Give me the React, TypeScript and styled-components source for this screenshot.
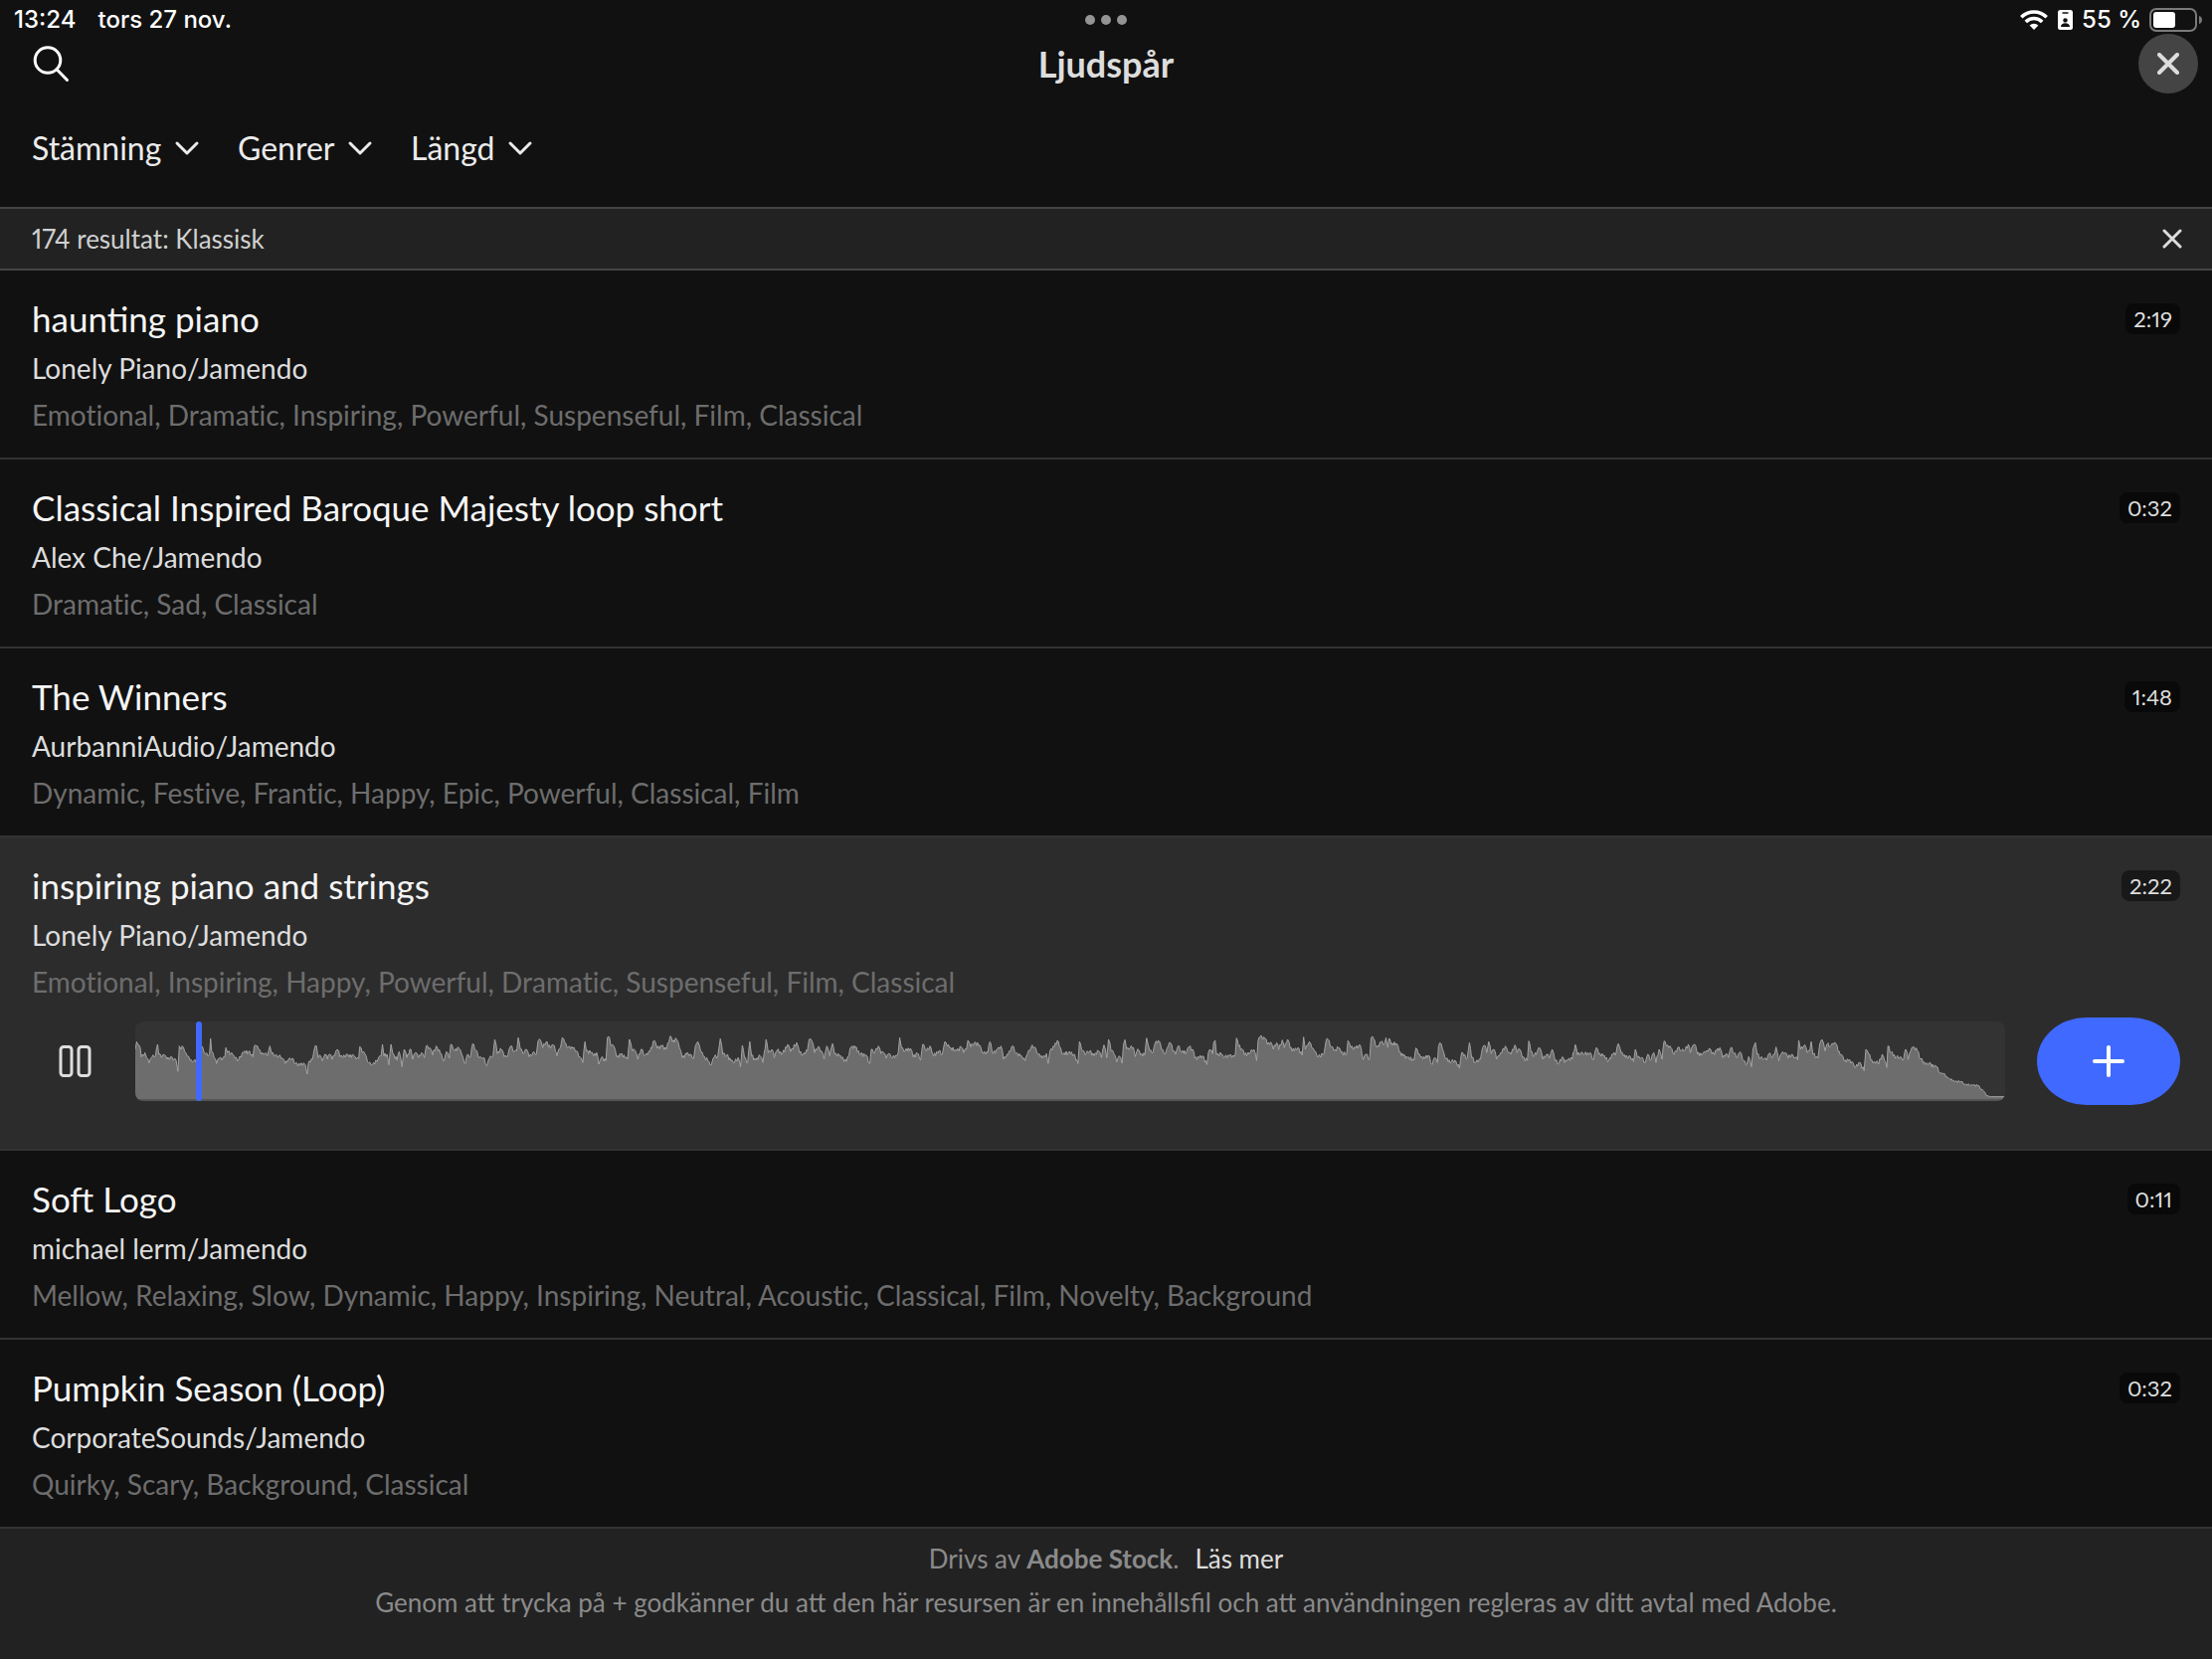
import React, { useState } from "react";
import styled, { createGlobalStyle } from "styled-components";

type Point = [number, number];
type Section = { start: number; points: Point[] };

const GlobalStyle = createGlobalStyle`
  *, *::before, *::after { box-sizing: border-box; }
  body {
    margin: 0;
    background: #111111;
    color: #ebebeb;
    font-family: Lato, "Noto Sans", sans-serif;
    font-variant-numeric: proportional-nums;
  }
  button, select, input { font: inherit; color: inherit; margin: 0; }
`;

const Page = styled.div`
  display: flex;
  flex-direction: column;
  min-height: 100vh;
`;

const StatusBar = styled.div`
  display: grid;
  grid-template-columns: 1fr auto 1fr;
  align-items: center;
  height: 34px;
  padding: 6px 10px 0;
  font-family: Inter, sans-serif;
  font-size: 24px;
  font-weight: 500;
  line-height: 28px;
  color: #ffffff;
`;

const StatusLeft = styled.div`
  display: flex;
  gap: 22px;
  padding-left: 4px;
`;

const StatusRight = styled.div`
  display: flex;
  align-items: center;
  justify-content: flex-end;
  gap: 8px;
`;

const Dots = styled.div`
  display: flex;
  gap: 6px;
`;

const Dot = styled.span`
  width: 10px;
  height: 10px;
  border-radius: 50%;
  background: #949494;
`;

const Header = styled.header`
  display: grid;
  grid-template-columns: 1fr auto 1fr;
  align-items: center;
  padding: 0 14px;
`;

const HeaderStart = styled.div`
  padding-left: 18px;
`;

const Heading = styled.h1`
  margin: 0;
  font-size: 36px;
  font-weight: 700;
  line-height: 60px;
  color: #dddddd;
`;

const IconButton = styled.button<{ $size: number; $round?: boolean; $end?: boolean }>`
  display: grid;
  place-items: center;
  justify-self: ${(p) => (p.$end ? "end" : "start")};
  width: ${(p) => p.$size}px;
  height: ${(p) => p.$size}px;
  padding: 0;
  border: 0;
  border-radius: ${(p) => (p.$round ? "50%" : "0")};
  background: ${(p) => (p.$round ? "#444444" : "transparent")};
`;

const Filters = styled.div`
  display: flex;
  align-items: center;
  gap: 38px;
  height: 114px;
  padding: 0 32px 4px;
`;

const FilterLabel = styled.label`
  display: flex;
  align-items: center;
  gap: 12px;
`;

const FilterSelect = styled.select`
  appearance: none;
  padding: 0;
  border: 0;
  background: transparent;
  font-size: 32px;
  line-height: 40px;
`;

const ResultBar = styled.div`
  display: flex;
  align-items: center;
  justify-content: space-between;
  height: 64px;
  padding: 0 30px 0 32px;
  border-top: 2px solid #444444;
  border-bottom: 2px solid #444444;
  background: #222222;
  font-size: 26px;
  color: #d0d0d0;
`;

const TrackList = styled.ul`
  margin: 0;
  padding: 0;
  list-style: none;
`;

const TrackItem = styled.li<{ $active: boolean }>`
  padding: 22px 32px ${(p) => (p.$active ? 44 : 20)}px;
  border-bottom: 2px solid #333333;
  background: ${(p) => (p.$active ? "#2c2c2c" : "#111111")};
`;

const TrackTop = styled.div`
  display: flex;
  align-items: flex-start;
  justify-content: space-between;
`;

const TrackTitle = styled.h2`
  margin: 0;
  font-size: 35px;
  font-weight: 400;
  line-height: 52px;
  color: #f5f5f5;
`;

const Artist = styled.p`
  margin: 0;
  font-size: 28px;
  line-height: 48px;
  color: #dddddd;
`;

const Tags = styled.p`
  margin: 0;
  font-size: 28px;
  font-variant-ligatures: none;
  line-height: 46px;
  color: #6d6d6d;
`;

const Duration = styled.time`
  margin-top: 11px;
  padding: 0 8px;
  border-radius: 8px;
  background: rgba(0, 0, 0, 0.45);
  font-size: 22px;
  line-height: 31px;
  color: #dddddd;
`;

const Player = styled.div`
  display: flex;
  align-items: center;
  gap: 32px;
  margin-top: 13px;
`;

const PauseButton = styled.button`
  display: grid;
  place-items: center;
  width: 72px;
  height: 72px;
  padding: 0 0 0 16px;
  border: 0;
  background: transparent;
`;

const Timeline = styled.div`
  display: grid;
  flex: 1;
  height: 80px;
`;

const Wave = styled.svg`
  grid-area: 1 / 1;
  width: 100%;
  height: 80px;
  border-radius: 8px;
  background: #333333;
`;

const Scrubber = styled.input`
  grid-area: 1 / 1;
  appearance: none;
  z-index: 1;
  width: 100%;
  height: 80px;
  background: transparent;

  &::-webkit-slider-thumb {
    appearance: none;
    width: 6px;
    height: 80px;
    border-radius: 3px;
    background: #4069ff;
  }
`;

const AddButton = styled.button`
  display: grid;
  place-items: center;
  width: 144px;
  height: 88px;
  padding: 0;
  border: 0;
  border-radius: 50px / 44px;
  background: #4069ff;
`;

const Footer = styled.footer`
  flex: 1;
  padding: 8px 32px 24px;
  background: #222222;
  text-align: center;
  font-size: 26px;
  line-height: 44px;
  color: #8a8a8a;

  p { margin: 0; }
`;

const MoreLink = styled.a`
  margin-left: 16px;
  color: #dddddd;
  text-decoration: none;
`;

const SearchIcon = () => (
  <svg width="38" height="38" viewBox="0 0 38 38" fill="none" stroke="#ffffff" strokeWidth="3" strokeLinecap="round">
    <circle cx="16" cy="15.500" r="12.800" />
    <path d="M25 24.800 35.500 35.500" />
  </svg>
);

const CrossIcon = ({ size, weight }: { size: number; weight: number }) => (
  <svg width={size} height={size} viewBox={`0 0 ${size} ${size}`} stroke="#dddddd" strokeWidth={weight} strokeLinecap="round">
    <path d={`M2 2 ${size - 2} ${size - 2}M${size - 2} 2 2 ${size - 2}`} />
  </svg>
);

const ChevronIcon = () => (
  <svg width="26" height="16" viewBox="0 0 26 16" fill="none" stroke="#ebebeb" strokeWidth="3" strokeLinecap="round" strokeLinejoin="round">
    <path d="M3 3 13 13 23 3" />
  </svg>
);

const WifiIcon = () => (
  <svg width="30" height="20" viewBox="0 0 30 20" fill="none" stroke="#ffffff" strokeWidth="3.6">
    <path d="M1.3 7.2a18 18 0 0 1 25.4 0" />
    <path d="M5.8 11.9a11.6 11.6 0 0 1 16.4 0" />
    <path d="M14 20 9.6 15.6a6.2 6.2 0 0 1 8.8 0Z" fill="#ffffff" stroke="none" />
  </svg>
);

const BadgeIcon = () => (
  <svg width="16" height="20" viewBox="0 0 16 20">
    <rect x="0" y="0" width="15" height="20" rx="2.5" fill="#ffffff" />
    <path d="M5 3h5" stroke="#111111" strokeWidth="1.4" strokeLinecap="round" />
    <circle cx="7.5" cy="10.4" r="2.2" fill="#111111" />
    <path d="M3 17c0-2.6 2-3.7 4.5-3.7S12 14.4 12 17Z" fill="#111111" />
  </svg>
);

const BatteryIcon = () => (
  <svg width="53" height="24" viewBox="0 0 53 24">
    <rect x="1" y="1" width="46" height="22" rx="6" fill="none" stroke="#7a7a7a" strokeWidth="2" />
    <rect x="4" y="4" width="22" height="16" rx="3" fill="#ffffff" />
    <path d="M50 8c4 1 4 7 0 8Z" fill="#7a7a7a" />
  </svg>
);

const PauseIcon = () => (
  <svg width="34" height="34" viewBox="0 0 34 34" fill="none" stroke="#dddddd" strokeWidth="3">
    <rect x="2" y="2.500" width="11" height="29" rx="3" />
    <rect x="20" y="2.500" width="11" height="29" rx="3" />
  </svg>
);

const PlusIcon = () => (
  <svg width="34" height="34" viewBox="0 0 34 34" stroke="#ffffff" strokeWidth="4" strokeLinecap="round">
    <path d="M17 3V31M3 17H31" />
  </svg>
);

const WAVE_WIDTH = 5264;
const WAVE_HEIGHT = 240;

/* Loudness envelope of the playing track, in sections; y grows downwards. */
const envelope: Section[] = [
  { start: 0, points: [[0,84],[4,61],[8,71],[14,79],[17,107],[27,94],[32,109],[39,125],[47,107],[57,103],[63,69],[66,99],[74,109],[82,101],[89,114],[99,107],[107,117],[115,117],[120,151],[122,114],[124,74],[129,84],[132,74],[139,91],[146,104],[154,117],[164,119],[171,123],[187,74],[197,97],[205,105],[209,99],[212,52],[215,89],[222,109],[229,127],[236,111],[244,117],[252,107],[255,79],[260,94],[274,99],[281,111],[291,115],[304,94],[319,91],[331,107],[335,74],[341,74],[347,84],[354,99],[364,97],[372,104],[379,74],[384,97],[394,102],[404,104],[414,111],[422,127],[431,114],[442,111],[451,127],[464,132],[474,125],[479,131],[484,159],[487,127],[499,114],[504,84],[510,74],[515,109],[522,104],[527,119],[534,99],[541,114],[547,99],[554,114],[561,104],[569,84],[576,107],[584,109],[594,99],[602,107],[614,101],[622,114],[629,112],[632,76],[639,94],[647,99],[657,125],[667,131],[674,129],[684,111],[692,104],[696,69],[700,104],[709,99],[714,131],[720,69],[725,97],[737,117],[743,91],[751,137],[757,84],[764,109],[776,84],[781,114],[789,94],[797,109],[806,94],[814,109],[819,74],[829,79],[837,101],[847,74],[859,97],[869,119],[876,91],[884,111],[888,69],[899,89],[911,81],[919,99],[929,127],[934,101],[944,107],[950,67],[959,87],[969,109],[979,109],[990,134],[997,111],[1007,104],[1012,54],[1019,97],[1031,84],[1039,107],[1049,101],[1057,74],[1067,91],[1074,89],[1078,49],[1084,84],[1094,97],[1101,84],[1109,107],[1119,94],[1129,99],[1134,59],[1142,59],[1147,79],[1157,61],[1169,81],[1177,71],[1186,94]] },
  { start: 1187, points: [[0,104],[5,84],[10,79],[15,49],[22,64],[32,79],[45,81],[55,89],[65,107],[73,124],[79,61],[83,89],[95,94],[103,104],[112,94],[118,129],[125,109],[138,119],[142,49],[148,49],[152,74],[160,74],[168,107],[180,101],[195,107],[199,114],[204,54],[212,89],[220,87],[228,114],[237,84],[248,104],[262,91],[274,57],[282,81],[295,74],[308,84],[319,44],[325,61],[337,54],[345,79],[353,109],[365,99],[375,99],[385,111],[390,74],[397,61],[405,91],[412,104],[425,119],[435,131],[443,107],[453,104],[460,52],[467,99],[478,101],[490,119],[500,124],[510,109],[517,137],[522,72],[528,109],[537,124],[543,61],[548,104],[560,117],[572,104],[580,124],[589,54],[595,94],[605,84],[612,109],[620,87],[635,97],[650,69],[658,91],[675,64],[683,94],[693,99],[705,89],[710,54],[718,59],[725,94],[735,77],[745,89],[752,114],[760,74],[768,104],[776,67],[782,99],[795,104],[815,121],[828,77],[840,79],[855,99],[870,101],[881,127],[885,84],[895,94],[905,74],[912,97],[920,94],[927,111],[935,97],[945,109],[957,104],[961,94],[965,49],[970,79],[980,89],[995,81],[1003,107],[1015,97],[1024,117],[1030,69],[1040,89],[1050,74],[1060,104],[1075,89],[1085,99],[1092,61],[1105,79],[1125,89],[1138,77],[1145,94],[1153,84],[1157,57],[1165,77],[1175,64],[1190,71],[1200,97],[1213,94],[1219,61],[1228,97],[1240,84],[1250,74],[1257,114],[1270,101],[1283,74],[1292,97],[1305,104],[1318,119],[1325,97],[1335,77],[1345,77],[1355,99],[1367,111],[1378,97],[1383,127],[1388,89],[1400,77],[1409,57],[1415,77],[1425,99],[1440,94],[1455,99],[1467,127],[1471,61],[1480,89],[1490,97],[1500,89],[1512,104],[1525,89],[1533,109],[1540,71],[1548,109],[1553,54],[1560,89],[1567,94]] },
  { start: 2755, points: [[0,97],[8,122],[15,104],[23,126],[27,70],[31,55],[36,83],[46,79],[55,78],[60,106],[67,83],[75,101],[87,101],[92,50],[97,72],[101,88],[110,94],[116,66],[128,60],[134,84],[145,97],[153,74],[159,64],[166,90],[174,99],[181,74],[190,93],[205,92],[211,77],[222,84],[228,111],[240,110],[250,104],[262,130],[266,94],[272,87],[278,97],[281,64],[285,57],[289,100],[302,99],[312,108],[325,104],[339,106],[342,97],[345,50],[351,74],[360,83],[368,101],[384,94],[394,84],[402,118],[406,58],[412,47],[425,51],[432,69],[444,66],[449,84],[458,64],[464,85],[474,56],[480,79],[489,54],[496,79],[508,89],[518,79],[530,102],[534,47],[539,84],[550,61],[557,79],[565,90],[575,108],[592,94],[597,60],[603,54],[612,76],[620,89],[632,79],[640,94],[655,99],[659,58],[667,79],[680,81],[693,71],[702,115],[710,99],[720,114],[724,49],[731,52],[740,78],[752,64],[762,68],[766,49],[771,78],[775,51],[781,70],[796,66],[803,91],[815,105],[827,109],[845,117],[850,80],[857,99],[870,114],[885,102],[896,130],[903,109],[911,124],[914,74],[918,64],[925,84],[935,114],[950,122],[960,117],[973,141],[979,94],[985,104],[995,111],[1001,64],[1007,109],[1018,124],[1032,114],[1038,79],[1046,74],[1050,94],[1055,61],[1062,97],[1070,84],[1077,114],[1085,104],[1092,95],[1102,74],[1110,95],[1118,99],[1129,71],[1135,94],[1142,83],[1150,109],[1164,118],[1168,59],[1174,91],[1183,104],[1192,89],[1200,81],[1207,114],[1218,99],[1226,111],[1234,84],[1242,119],[1253,126],[1262,107],[1269,124],[1278,114],[1290,114],[1299,70],[1305,101],[1315,94],[1325,99],[1340,94],[1350,116],[1358,79],[1365,99],[1378,104],[1393,119],[1405,99],[1414,94],[1420,67],[1428,94],[1440,109],[1450,104],[1463,121],[1468,84],[1474,109],[1485,109],[1496,124],[1503,99],[1512,116],[1520,94],[1526,124],[1535,84],[1543,114],[1549,59],[1555,74],[1566,74]] },
  { start: 4323, points: [[0,79],[9,99],[19,79],[30,89],[40,87],[49,69],[55,94],[63,71],[70,74],[75,99],[90,97],[98,94],[108,81],[116,99],[129,89],[138,79],[146,109],[155,97],[162,109],[169,79],[178,96],[187,109],[195,92],[205,119],[214,129],[219,106],[227,137],[231,84],[238,64],[243,99],[252,111],[262,112],[270,117],[276,97],[286,109],[292,99],[296,77],[304,119],[311,97],[322,94],[330,111],[340,99],[350,109],[357,116],[360,57],[365,84],[374,74],[380,77],[384,94],[391,89],[395,61],[400,99],[414,111],[419,69],[426,55],[434,89],[439,69],[450,74],[457,69],[465,67],[471,91],[480,99],[488,119],[500,119],[510,121],[520,139],[532,124],[544,149],[549,84],[557,99],[569,126],[580,119],[585,129],[595,99],[602,119],[608,139],[611,74],[620,94],[635,109],[645,107],[655,115],[661,84],[668,115],[675,89],[682,77],[694,89],[703,114],[717,130],[728,124],[740,139],[748,136],[758,156],[768,157],[780,171],[800,181],[817,181],[828,190],[845,192],[867,193],[872,205],[880,209],[888,223],[900,227],[941,227]] },
];

/* Adds the fine grain between the envelope's corner points. */
const buildLine = (sections: Section[]): string => {
  const points = sections.flatMap((s) => s.points.map(([x, y]): Point => [x + s.start, y]));
  const out: string[] = [];
  points.forEach(([x, y], i) => {
    out.push(`${x},${y}`);
    const next = points[i + 1];
    if (!next || next[0] - x < 6 || y > 220) return;
    const steps = Math.floor((next[0] - x) / 3);
    const grain = y > 150 ? 3 : 6;
    for (let k = 1; k < steps; k += 1) {
      const t = k / steps;
      const sign = k % 2 === 0 ? 1 : -1;
      const swing = sign * grain * (0.4 + 0.6 * Math.abs(Math.sin(x * 1.7 + k * 2.3)));
      out.push(`${Math.round(x + (next[0] - x) * t)},${Math.round(y + (next[1] - y) * t + swing)}`);
    }
  });
  return out.join(" ");
};

const line = buildLine(envelope);

const Waveform = () => (
  <Wave viewBox={`0 0 ${WAVE_WIDTH} ${WAVE_HEIGHT}`} preserveAspectRatio="none" aria-hidden="true">
    <polygon points={`0,236 ${line} ${WAVE_WIDTH},236`} fill="#6d6d6d" />
    <polyline points={line} fill="none" stroke="#a3a3a3" strokeWidth="1" vectorEffect="non-scaling-stroke" />
    <path d={`M0 237H${WAVE_WIDTH}`} stroke="#555555" strokeWidth="2" vectorEffect="non-scaling-stroke" />
  </Wave>
);

const filters = ["Stämning", "Genrer", "Längd"];

const tracks = [
  { title: "haunting piano", artist: "Lonely Piano/Jamendo", tags: "Emotional, Dramatic, Inspiring, Powerful, Suspenseful, Film, Classical", time: "2:19" },
  { title: "Classical Inspired Baroque Majesty loop short", artist: "Alex Che/Jamendo", tags: "Dramatic, Sad, Classical", time: "0:32" },
  { title: "The Winners", artist: "AurbanniAudio/Jamendo", tags: "Dynamic, Festive, Frantic, Happy, Epic, Powerful, Classical, Film", time: "1:48" },
  { title: "inspiring piano and strings", artist: "Lonely Piano/Jamendo", tags: "Emotional, Inspiring, Happy, Powerful, Dramatic, Suspenseful, Film, Classical", time: "2:22", active: true },
  { title: "Soft Logo", artist: "michael lerm/Jamendo", tags: "Mellow, Relaxing, Slow, Dynamic, Happy, Inspiring, Neutral, Acoustic, Classical, Film, Novelty, Background", time: "0:11" },
  { title: "Pumpkin Season (Loop)", artist: "CorporateSounds/Jamendo", tags: "Quirky, Scary, Background, Classical", time: "0:32" },
];

export default function App() {
  const [position, setPosition] = useState(4.6);

  return (
    <Page>
      <GlobalStyle />
      <StatusBar>
        <StatusLeft>
          <span>13:24</span>
          <span>tors 27 nov.</span>
        </StatusLeft>
        <Dots>
          <Dot />
          <Dot />
          <Dot />
        </Dots>
        <StatusRight>
          <WifiIcon />
          <BadgeIcon />
          <span>55 %</span>
          <BatteryIcon />
        </StatusRight>
      </StatusBar>

      <Header>
        <HeaderStart>
          <IconButton $size={38} aria-label="Sök">
            <SearchIcon />
          </IconButton>
        </HeaderStart>
        <Heading>Ljudspår</Heading>
        <IconButton $size={60} $round $end aria-label="Stäng">
          <CrossIcon size={22} weight={4} />
        </IconButton>
      </Header>

      <Filters>
        {filters.map((name) => (
          <FilterLabel key={name}>
            <FilterSelect aria-label={name}>
              <option>{name}</option>
            </FilterSelect>
            <ChevronIcon />
          </FilterLabel>
        ))}
      </Filters>

      <ResultBar>
        <span>174 resultat: Klassisk</span>
        <IconButton $size={20} $end aria-label="Rensa">
          <CrossIcon size={20} weight={3} />
        </IconButton>
      </ResultBar>

      <TrackList>
        {tracks.map((track) => (
          <TrackItem key={track.title} $active={Boolean(track.active)}>
            <TrackTop>
              <TrackTitle>{track.title}</TrackTitle>
              <Duration>{track.time}</Duration>
            </TrackTop>
            <Artist>{track.artist}</Artist>
            <Tags>{track.tags}</Tags>
            {track.active && (
              <Player>
                <PauseButton aria-label="Pausa">
                  <PauseIcon />
                </PauseButton>
                <Timeline>
                  <Waveform />
                  <Scrubber
                    type="range"
                    aria-label="Position"
                    min={0}
                    max={142}
                    step={0.1}
                    value={position}
                    onChange={(e) => setPosition(Number(e.target.value))}
                  />
                </Timeline>
                <AddButton aria-label="Lägg till">
                  <PlusIcon />
                </AddButton>
              </Player>
            )}
          </TrackItem>
        ))}
      </TrackList>

      <Footer>
        <p>
          Drivs av <strong>Adobe Stock</strong>.<MoreLink href="#more">Läs mer</MoreLink>
        </p>
        <p>Genom att trycka på + godkänner du att den här resursen är en innehållsfil och att användningen regleras av ditt avtal med Adobe.</p>
      </Footer>
    </Page>
  );
}
